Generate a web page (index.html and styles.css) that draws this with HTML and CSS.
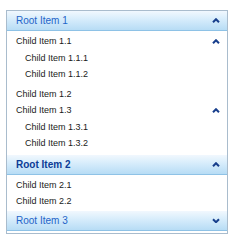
FILE: index.html
```html
<!DOCTYPE html>
<html lang="en">
<head>
    <meta charset="UTF-8">
    <title>Panel Bar</title>
    <link rel="stylesheet" href="styles.css">
</head>
<body>

    <div class="panelbar">
        <!-- Root 1 -->
        <div class="root-head">
            <span class="root-text">Root Item 1</span>
            <svg class="arrow" width="8" height="5" viewBox="0 0 8 5"><polyline points="1,4.2 4,1.2 7,4.2"/></svg>
        </div>
        <div class="group">
            <div class="item">
                <span>Child Item 1.1</span>
                <svg class="arrow" width="8" height="5" viewBox="0 0 8 5"><polyline points="1,4.2 4,1.2 7,4.2"/></svg>
            </div>
            <div class="sub">
                <div class="item">Child Item 1.1.1</div>
                <div class="item">Child Item 1.1.2</div>
            </div>
            <div class="item">Child Item 1.2</div>
            <div class="item">
                <span>Child Item 1.3</span>
                <svg class="arrow" width="8" height="5" viewBox="0 0 8 5"><polyline points="1,4.2 4,1.2 7,4.2"/></svg>
            </div>
            <div class="sub">
                <div class="item">Child Item 1.3.1</div>
                <div class="item">Child Item 1.3.2</div>
            </div>
        </div>

        <!-- Root 2 -->
        <div class="root-head active">
            <span class="root-text">Root Item 2</span>
            <svg class="arrow" width="8" height="5" viewBox="0 0 8 5"><polyline points="1,4.2 4,1.2 7,4.2"/></svg>
        </div>
        <div class="group">
            <div class="item">Child Item 2.1</div>
            <div class="item">Child Item 2.2</div>
        </div>

        <!-- Root 3 -->
        <div class="root-head">
            <span class="root-text">Root Item 3</span>
            <svg class="arrow" width="8" height="5" viewBox="0 0 8 5"><polyline points="1,1.2 4,4.2 7,1.2"/></svg>
        </div>
    </div>

</body>
</html>
```

FILE: styles.css
```css
* {
    margin: 0;
    padding: 0;
    box-sizing: border-box;
    font-family: 'Liberation Sans', Arial, sans-serif;
}

body {
    background-color: #ffffff;
    padding: 10px 0 0 6px;
}

.panelbar {
    width: 222px;
    border: 1px solid #a9bccd;
    padding-bottom: 2px;
    background-color: #ffffff;
}

.root-head {
    display: flex;
    align-items: center;
    justify-content: space-between;
    height: 20px;
    padding: 0 7px 0 9px;
    background: linear-gradient(to bottom, #f1f8fe 0%, #d6ecfb 45%, #b7dcf5 100%);
    border-bottom: 1px solid #8ec2e6;
    font-size: 10px;
    color: #1f64c8;
}

.root-head.active {
    font-weight: bold;
    color: #0c3c96;
}

.arrow polyline {
    fill: none;
    stroke: #173e8c;
    stroke-width: 2;
}

.group {
    padding: 2px 0;
}

.item {
    display: flex;
    align-items: center;
    justify-content: space-between;
    height: 16px;
    padding: 0 7px 0 9px;
    font-size: 9px;
    color: #1a1a1a;
}

.sub {
    padding: 1px 0 4px;
}

.sub .item {
    padding-left: 18px;
}

.sub:last-child {
    padding-bottom: 2px;
}
```
